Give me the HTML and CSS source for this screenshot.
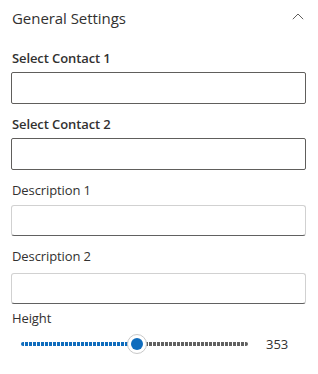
FILE: index.html
```html
<!DOCTYPE html>
<html>
<head>
<meta charset="utf-8">
<link rel="stylesheet" href="styles.css">
</head>
<body>
<div class="panel">
  <div class="header">
    <span class="title">General Settings</span>
    <svg class="chevron" width="12" height="7" viewBox="0 0 12 7"><path d="M0.8 6.2 L6 1 L11.2 6.2" fill="none" stroke="#605e5c" stroke-width="1"/></svg>
  </div>
  <div class="field f1">
    <div class="label bold">Select Contact 1</div>
    <div class="box picker"></div>
  </div>
  <div class="field f2">
    <div class="label bold">Select Contact 2</div>
    <div class="box picker"></div>
  </div>
  <div class="field f3">
    <div class="label">Description 1</div>
    <div class="box text"></div>
  </div>
  <div class="field f4">
    <div class="label">Description 2</div>
    <div class="box text"></div>
  </div>
  <div class="field f5">
    <div class="label">Height</div>
    <div class="slider-row">
      <div class="slider">
        <div class="track-fill" style="width:116px"></div>
        <div class="track-rest"></div>
        <div class="thumb" style="left:106px"><div class="dot"></div></div>
      </div>
      <span class="value">353</span>
    </div>
  </div>
</div>
</body>
</html>
```

FILE: styles.css
```css
html, body {
  margin: 0;
  padding: 0;
  background: #ffffff;
}
body {
  font-family: "Open Sans", "Noto Sans", sans-serif;
  color: #323130;
}
.panel {
  width: 318px;
  padding: 0 12px 0 11px;
  box-sizing: border-box;
}
.header {
  display: flex;
  align-items: center;
  justify-content: space-between;
  height: 36px;
  padding-left: 1px;
}
.title {
  font-size: 15px;
  letter-spacing: -0.05px;
  color: #323130;
}
.chevron {
  margin-right: 2px;
  margin-top: -3px;
}
.field {
  display: flex;
  flex-direction: column;
}
.f1 { margin-top: 12px; }
.f2 { margin-top: 10px; }
.f3 { margin-top: 10px; }
.f4 { margin-top: 10px; }
.f5 { margin-top: 4px; }
.label {
  font-size: 13px;
  line-height: 20px;
  padding: 0 0 4px 1px;
  color: #323130;
  letter-spacing: -0.1px;
}
.label.bold {
  font-weight: 600;
}
.f3 .label { padding-bottom: 5px; }
.f4 .label { padding-bottom: 7px; }
.box {
  height: 32px;
  box-sizing: border-box;
  border-radius: 2px;
  background: #fff;
}
.picker {
  border: 1px solid #605e5c;
}
.text {
  border: 1px solid #d1d1d1;
  border-bottom: 1px solid #616161;
  border-radius: 3px;
  height: 31px;
}
.slider-row {
  display: flex;
  align-items: center;
  height: 28px;
  margin-top: -2px;
}
.slider {
  position: relative;
  margin-left: 10px;
  width: 227px;
  height: 20px;
  display: flex;
  align-items: center;
}
.track-fill {
  height: 4px;
  background: repeating-linear-gradient(to right, #0f6cbd 0 3px, #ffffff 3px 4px);
  border-radius: 2px 0 0 2px;
}
.track-rest {
  flex: 1;
  height: 4px;
  background: repeating-linear-gradient(to right, #616161 0 3px, #ffffff 3px 4px);
  border-radius: 0 2px 2px 0;
}
.thumb {
  position: absolute;
  top: 0;
  width: 20px;
  height: 20px;
  box-sizing: border-box;
  border-radius: 50%;
  border: 1px solid #c8c8c8;
  background: #fff;
  display: flex;
  align-items: center;
  justify-content: center;
}
.dot {
  width: 12px;
  height: 12px;
  border-radius: 50%;
  background: #0f6cbd;
}
.value {
  margin-left: 18px;
  font-size: 13px;
  color: #323130;
}
```
